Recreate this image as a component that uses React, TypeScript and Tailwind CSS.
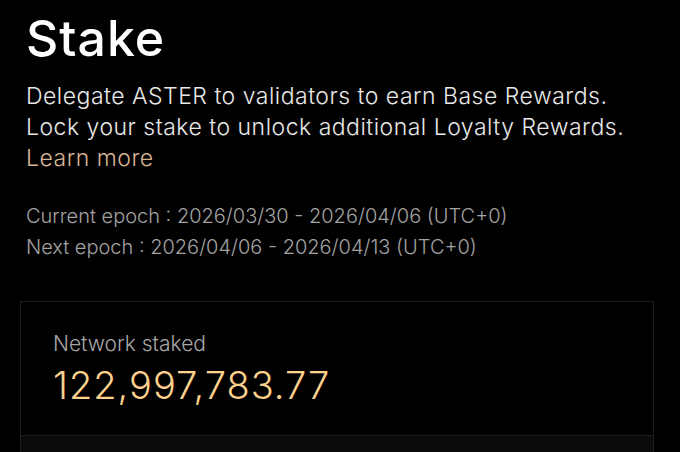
export default function App() {
  return (
    <div
      className="h-[452px] w-[680px] overflow-hidden bg-black px-[26px] pt-[6px]"
      style={{ fontFamily: 'Inter, "Noto Sans", sans-serif' }}
    >
      <h1 className="text-[50px] font-medium leading-[64px] tracking-[1px] text-white">Stake</h1>

      <div className="mt-[11px] text-[23px] font-light leading-[31px] tracking-[0.5px] text-[#e8e8e8]">
        <p>Delegate ASTER to validators to earn Base Rewards.</p>
        <p>Lock your stake to unlock additional Loyalty Rewards.</p>
        <a className="text-[#d7b595]">Learn more</a>
      </div>

      <div className="mt-[27px] text-[20px] font-light leading-[31px] text-[#a3a3a3]">
        <p>Current epoch : 2026/03/30 - 2026/04/06 (UTC+0)</p>
        <p>Next epoch : 2026/04/06 - 2026/04/13 (UTC+0)</p>
      </div>

      <div className="-ml-[6px] mt-[38px] w-[634px] border border-[#1c1c1c]">
        <div className="px-[32px] pt-[28px] pb-[28px]">
          <div className="text-[21px] font-light leading-[28px] text-[#a8a8a8]">Network staked</div>
          <div className="mt-[5px] text-[38px] font-light leading-[44px] tracking-[1px] text-[#fdd18c]">122,997,783.77</div>
        </div>
        <div className="h-[40px] border-t border-[#1c1c1c] bg-[#0b0b0b]" />
      </div>
    </div>
  );
}
